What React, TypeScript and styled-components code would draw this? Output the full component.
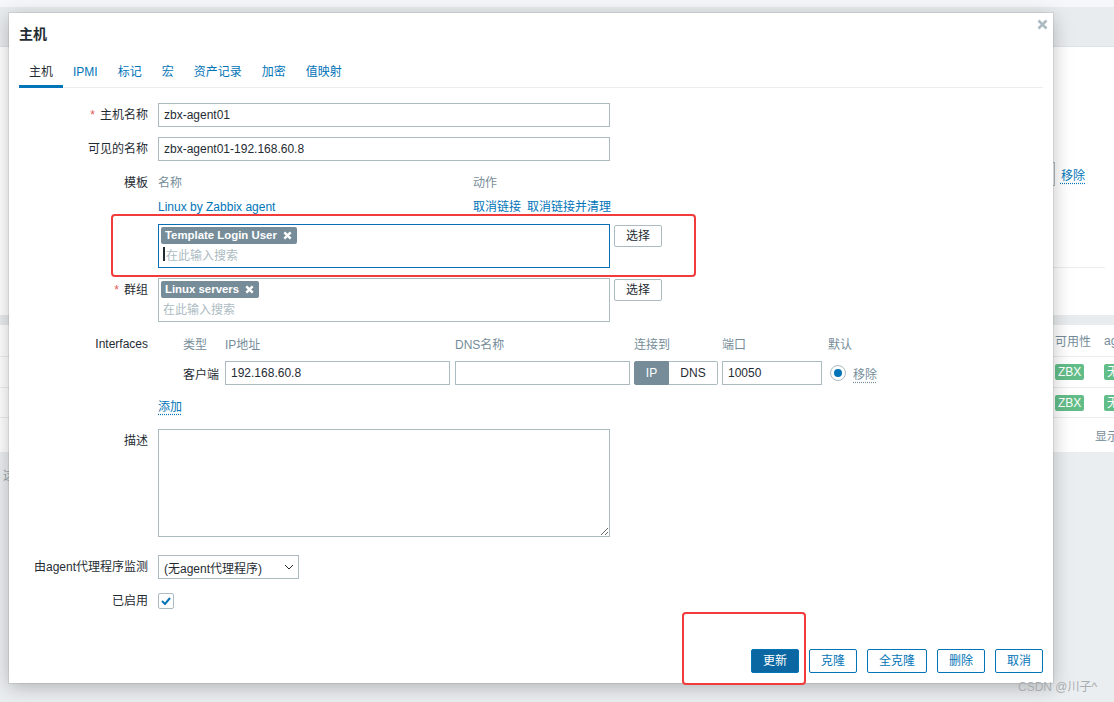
import styled, { createGlobalStyle } from "styled-components";

const GlobalStyle = createGlobalStyle`
  html, body {
    margin: 0;
    padding: 0;
  }
  body {
    font-family: "Liberation Sans", Arial, "Noto Sans CJK SC", sans-serif;
    font-size: 12px;
    color: #1f2c33;
    background: #ebeef0;
  }
  * {
    box-sizing: border-box;
  }
`;

/* ---------- background page ---------- */

const Page = styled.div`
  position: relative;
  width: 1114px;
  height: 702px;
  overflow: hidden;
  display: flex;
  flex-direction: column;
  background: #ebeef0;
`;

const TopStrip = styled.div`
  height: 7px;
  background: #f6f7f8;
`;

const HeaderBand = styled.div`
  height: 40px;
  background: #e9ecee;
  border-bottom: 1px solid #dde2e5;
`;

const FilterPanel = styled.div`
  height: 268px;
  background: #ffffff;
  display: flex;
  flex-direction: column;
  padding-top: 115px;
`;

const FilterRow = styled.div`
  display: flex;
  justify-content: flex-end;
  align-items: center;
  gap: 6px;
  height: 24px;
  padding-right: 29px;
`;

const FakeField = styled.div`
  width: 300px;
  height: 24px;
  border: 1px solid #acbbc2;
`;

const Divider = styled.div`
  margin: 81px 9px 0 auto;
  width: 400px;
  border-top: 1px solid #ebeef0;
`;

const GapBand = styled.div`
  height: 10px;
  background: #e9ecee;
`;

const TablePanel = styled.div`
  background: #ffffff;
  display: flex;
  flex-direction: column;
`;

const TableRow = styled.div<{ $height: number; $head?: boolean }>`
  display: grid;
  grid-template-columns: 1055px 49px 1fr;
  align-items: center;
  height: ${({ $height }) => $height}px;
  border-bottom: 1px solid #ebeef0;
  color: ${({ $head }) => ($head ? "#768d99" : "#1f2c33")};
  white-space: nowrap;
  overflow: hidden;
`;

const TableFoot = styled.div`
  display: grid;
  grid-template-columns: 1095px 1fr;
  align-items: center;
  height: 34px;
  color: #768d99;
  white-space: nowrap;
  overflow: hidden;
`;

const Badge = styled.span`
  justify-self: start;
  display: inline-block;
  height: 16px;
  line-height: 16px;
  padding: 0 3px;
  border-radius: 2px;
  background: #63bd88;
  color: #ffffff;
`;

const BottomArea = styled.div`
  flex: 1;
  padding: 14px 0 0 3px;
  color: #9aa7ae;
`;

/* ---------- dialog ---------- */

const Dialog = styled.div`
  position: absolute;
  left: 9px;
  top: 13px;
  width: 1044px;
  height: 670px;
  background: #ffffff;
  box-shadow: 0 0 0 1px rgba(0, 0, 0, 0.07), 0 4px 18px rgba(0, 0, 0, 0.25);
  display: flex;
  flex-direction: column;
  padding: 0 10px;
`;

const DialogHeader = styled.div`
  position: relative;
  padding: 10px 0;
`;

const Title = styled.h4`
  margin: 0;
  font-size: 14px;
  line-height: 22px;
  font-weight: bold;
  color: #1f2c33;
`;

const CloseButton = styled.span`
  position: absolute;
  right: -5px;
  top: 6px;
  display: flex;
`;

const TabList = styled.div`
  display: flex;
  border-bottom: 1px solid #ebeef0;
`;

const Tab = styled.span<{ $active?: boolean }>`
  padding: 8px 10px 4px;
  line-height: 18px;
  margin-bottom: -1px;
  color: ${({ $active }) => ($active ? "#1f2c33" : "#0275b8")};
  border-bottom: 3px solid ${({ $active }) => ($active ? "#0275b8" : "transparent")};
`;

const Form = styled.div`
  padding-top: 15px;
  display: flex;
  flex-direction: column;
`;

const FormRow = styled.div<{ $gap?: number }>`
  display: grid;
  grid-template-columns: 139px 1fr;
  margin-top: ${({ $gap }) => ($gap ?? 10)}px;
`;

const Label = styled.div`
  text-align: right;
  padding-right: 10px;
  line-height: 24px;
  white-space: nowrap;
`;

const Required = styled.span`
  color: #e45959;
  margin-right: 5px;
`;

const TextInput = styled.input<{ $width: number }>`
  width: ${({ $width }) => $width}px;
  height: 24px;
  border: 1px solid #acbbc2;
  padding: 0 5px;
  font: inherit;
  color: #1f2c33;
  background: #ffffff;
  outline: none;
`;

const TemplateTable = styled.div`
  display: grid;
  grid-template-columns: 315px auto;
  line-height: 24px;
`;

const HeadCell = styled.span`
  color: #768d99;
`;

const Link = styled.span`
  color: #0275b8;
`;

const Actions = styled.span`
  display: flex;
  gap: 6px;
`;

const PickerRow = styled.div<{ $top?: number }>`
  display: flex;
  align-items: flex-start;
  gap: 4px;
  margin-top: ${({ $top }) => $top ?? 0}px;
`;

const MultiSelect = styled.div<{ $focused?: boolean }>`
  width: 452px;
  height: 44px;
  border: 1px solid ${({ $focused }) => ($focused ? "#0a6eb4" : "#acbbc2")};
  padding: 2px;
  display: flex;
  flex-direction: column;
  align-items: flex-start;
`;

const Tag = styled.span`
  display: inline-flex;
  align-items: center;
  gap: 6px;
  height: 17px;
  padding: 0 5px 0 4px;
  border-radius: 2px;
  background: #768d99;
  color: #ffffff;
  font-weight: bold;
  font-size: 11.4px;
`;

const SearchLine = styled.div`
  height: 22px;
  display: flex;
  align-items: center;
  padding-left: 2px;
  color: #acbbc2;
`;

const Caret = styled.span`
  display: inline-block;
  width: 2px;
  height: 14px;
  background: #1f2c33;
  margin-right: 1px;
`;

const Button = styled.button<{ $primary?: boolean }>`
  height: 24px;
  padding: 0 11px;
  border: 1px solid #0275b8;
  border-radius: 2px;
  font: inherit;
  line-height: 22px;
  cursor: pointer;
  background: ${({ $primary }) => ($primary ? "#0b67a1" : "#ffffff")};
  color: ${({ $primary }) => ($primary ? "#ffffff" : "#0275b8")};
`;

const PickButton = styled(Button)`
  height: 22px;
  margin-top: 1px;
  border-color: #acbbc2;
  line-height: 20px;
  color: #1f2c33;
`;

const IfaceGrid = styled.div`
  display: grid;
  grid-template-columns: 25px 42px 230px 179px 88px 106px auto;
  grid-template-rows: 22px 24px;
  row-gap: 7px;
  align-items: center;
  white-space: nowrap;
`;

const Toggle = styled.div`
  display: flex;
  height: 24px;
  width: 84px;
`;

const ToggleSeg = styled.span<{ $on?: boolean; $width: number }>`
  width: ${({ $width }) => $width}px;
  display: flex;
  align-items: center;
  justify-content: center;
  background: ${({ $on }) => ($on ? "#768d99" : "#ffffff")};
  color: ${({ $on }) => ($on ? "#ffffff" : "#1f2c33")};
  border: 1px solid ${({ $on }) => ($on ? "#768d99" : "#acbbc2")};
  border-left: ${({ $on }) => ($on ? undefined : "none")};
  border-radius: ${({ $on }) => ($on ? "2px 0 0 2px" : "0 2px 2px 0")};
`;

const DefaultCell = styled.div`
  display: flex;
  align-items: center;
  gap: 7px;
`;

const Radio = styled.span`
  width: 16px;
  height: 16px;
  margin-left: 2px;
  border: 1px solid #acbbc2;
  border-radius: 50%;
  display: flex;
  align-items: center;
  justify-content: center;
  &::after {
    content: "";
    width: 8px;
    height: 8px;
    border-radius: 50%;
    background: #0275b8;
  }
`;

const DottedLink = styled.span<{ $muted?: boolean }>`
  color: ${({ $muted }) => ($muted ? "#768d99" : "#0275b8")};
  text-decoration: underline dotted;
  text-underline-offset: 3px;
`;

const AddLine = styled.div`
  line-height: 24px;
  margin-top: 10px;
`;

const TextArea = styled.textarea`
  width: 452px;
  height: 108px;
  border: 1px solid #acbbc2;
  font: inherit;
  padding: 4px 5px;
  outline: none;
  display: block;
`;

const Select = styled.div`
  width: 141px;
  height: 24px;
  border: 1px solid #acbbc2;
  display: flex;
  align-items: center;
  justify-content: space-between;
  padding: 0 4px 0 5px;
  white-space: nowrap;
`;

const CheckBox = styled.span`
  margin-top: 4px;
  width: 16px;
  height: 16px;
  border: 1px solid #acbbc2;
  border-radius: 2px;
  display: flex;
  align-items: center;
  justify-content: center;
`;

const Footer = styled.div`
  margin-top: auto;
  padding-bottom: 10px;
  display: flex;
  justify-content: flex-end;
  gap: 10px;
`;

/* ---------- overlays ---------- */

const Annotation = styled.div`
  position: absolute;
  border: 2px solid #f23b3b;
  border-radius: 4px;
  pointer-events: none;
`;

const Watermark = styled.div`
  position: absolute;
  left: 1018px;
  top: 679px;
  font-size: 12px;
  line-height: 16px;
  color: #a9adb1;
  white-space: nowrap;
`;

const TagX = () => (
  <svg width="9" height="9" viewBox="0 0 9 9">
    <path d="M1.3 1.3 L7.7 7.7 M7.7 1.3 L1.3 7.7" stroke="#ffffff" strokeWidth="2.4" />
  </svg>
);

export default function App() {
  return (
    <>
      <GlobalStyle />
      <Page>
        <TopStrip />
        <HeaderBand />
        <FilterPanel>
          <FilterRow>
            <FakeField />
            <DottedLink>移除</DottedLink>
          </FilterRow>
          <Divider />
        </FilterPanel>
        <GapBand />
        <TablePanel>
          <TableRow $height={32} $head>
            <span />
            <span>可用性</span>
            <span>agent</span>
          </TableRow>
          <TableRow $height={31}>
            <span />
            <Badge>ZBX</Badge>
            <Badge>无</Badge>
          </TableRow>
          <TableRow $height={30}>
            <span />
            <Badge>ZBX</Badge>
            <Badge>无</Badge>
          </TableRow>
          <TableFoot>
            <span />
            <span>显示 2 中的 2</span>
          </TableFoot>
        </TablePanel>
        <BottomArea>这</BottomArea>

        <Dialog>
          <DialogHeader>
            <Title>主机</Title>
            <CloseButton>
              <svg width="11" height="11" viewBox="0 0 11 11">
                <path d="M1.5 1.5 L9.5 9.5 M9.5 1.5 L1.5 9.5" stroke="#acbbc2" strokeWidth="2.6" />
              </svg>
            </CloseButton>
          </DialogHeader>

          <TabList>
            <Tab $active>主机</Tab>
            <Tab>IPMI</Tab>
            <Tab>标记</Tab>
            <Tab>宏</Tab>
            <Tab>资产记录</Tab>
            <Tab>加密</Tab>
            <Tab>值映射</Tab>
          </TabList>

          <Form>
            <FormRow $gap={0}>
              <Label>
                <Required>*</Required>主机名称
              </Label>
              <div>
                <TextInput $width={452} readOnly value="zbx-agent01" />
              </div>
            </FormRow>

            <FormRow>
              <Label>可见的名称</Label>
              <div>
                <TextInput $width={452} readOnly value="zbx-agent01-192.168.60.8" />
              </div>
            </FormRow>

            <FormRow>
              <Label>模板</Label>
              <div>
                <TemplateTable>
                  <HeadCell>名称</HeadCell>
                  <HeadCell>动作</HeadCell>
                  <Link>Linux by Zabbix agent</Link>
                  <Actions>
                    <Link>取消链接</Link>
                    <Link>取消链接并清理</Link>
                  </Actions>
                </TemplateTable>
                <PickerRow $top={5}>
                  <MultiSelect $focused>
                    <Tag>
                      Template Login User
                      <TagX />
                    </Tag>
                    <SearchLine>
                      <Caret />
                      在此输入搜索
                    </SearchLine>
                  </MultiSelect>
                  <PickButton>选择</PickButton>
                </PickerRow>
              </div>
            </FormRow>

            <FormRow>
              <Label>
                <Required>*</Required>群组
              </Label>
              <PickerRow>
                <MultiSelect>
                  <Tag>
                    Linux servers
                    <TagX />
                  </Tag>
                  <SearchLine>在此输入搜索</SearchLine>
                </MultiSelect>
                <PickButton>选择</PickButton>
              </PickerRow>
            </FormRow>

            <FormRow>
              <Label>Interfaces</Label>
              <div>
                <IfaceGrid>
                  <span />
                  <HeadCell>类型</HeadCell>
                  <HeadCell>IP地址</HeadCell>
                  <HeadCell>DNS名称</HeadCell>
                  <HeadCell>连接到</HeadCell>
                  <HeadCell>端口</HeadCell>
                  <HeadCell>默认</HeadCell>

                  <span />
                  <span>客户端</span>
                  <TextInput $width={225} readOnly value="192.168.60.8" />
                  <TextInput $width={175} readOnly value="" />
                  <Toggle>
                    <ToggleSeg $on $width={35}>IP</ToggleSeg>
                    <ToggleSeg $width={49}>DNS</ToggleSeg>
                  </Toggle>
                  <TextInput $width={100} readOnly value="10050" />
                  <DefaultCell>
                    <Radio />
                    <DottedLink $muted>移除</DottedLink>
                  </DefaultCell>
                </IfaceGrid>
                <AddLine>
                  <DottedLink>添加</DottedLink>
                </AddLine>
              </div>
            </FormRow>

            <FormRow>
              <Label>描述</Label>
              <div>
                <TextArea readOnly value="" />
              </div>
            </FormRow>

            <FormRow $gap={18}>
              <Label>由agent代理程序监测</Label>
              <div>
                <Select>
                  <span>(无agent代理程序)</span>
                  <svg width="10" height="6" viewBox="0 0 10 6">
                    <path d="M1 1 L5 5 L9 1" fill="none" stroke="#1f2c33" strokeWidth="1" />
                  </svg>
                </Select>
              </div>
            </FormRow>

            <FormRow>
              <Label>已启用</Label>
              <div>
                <CheckBox>
                  <svg width="10" height="8" viewBox="0 0 10 8">
                    <path d="M1 4 L4 7 L9 1" fill="none" stroke="#0275b8" strokeWidth="2" />
                  </svg>
                </CheckBox>
              </div>
            </FormRow>
          </Form>

          <Footer>
            <Button $primary>更新</Button>
            <Button>克隆</Button>
            <Button>全克隆</Button>
            <Button>删除</Button>
            <Button>取消</Button>
          </Footer>
        </Dialog>

        <Annotation style={{ left: 111, top: 214, width: 585, height: 63 }} />
        <Annotation style={{ left: 682, top: 612, width: 124, height: 73 }} />
        <Watermark>CSDN @川子^</Watermark>
      </Page>
    </>
  );
}
